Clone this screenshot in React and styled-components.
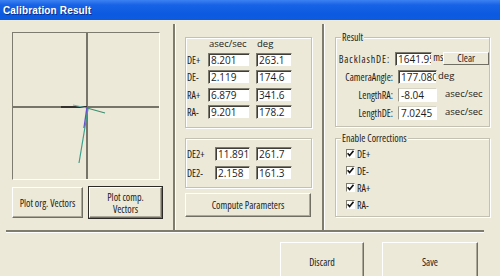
import styled, { createGlobalStyle } from "styled-components";

const GlobalStyle = createGlobalStyle`
  html, body {
    margin: 0;
    padding: 0;
    background: #ece9d8;
  }
`;

const uiFont = `"Open Sans", "Liberation Sans", Arial, sans-serif`;

export default function App() {
  return (
    <>
      <GlobalStyle />
      <Window>
        <TitleBar>Calibration Result</TitleBar>

        <Body>
          <LeftPane>
            <Plot>
              <svg width="146" height="146" viewBox="0 0 146 146">
                <line x1="74" y1="0" x2="74" y2="146" stroke="#77746a" strokeWidth="2" />
                <line x1="0" y1="74" x2="146" y2="74" stroke="#77746a" strokeWidth="2" />
                <line x1="48" y1="74" x2="74" y2="74" stroke="#1c1c1c" strokeWidth="1.5" />
                <line x1="60" y1="72" x2="74" y2="75" stroke="#6fb7b0" strokeWidth="1.2" />
                <line x1="74" y1="75" x2="92" y2="80" stroke="#3b8f70" strokeWidth="1.2" />
                <line x1="74" y1="74" x2="71" y2="95" stroke="#6a4fd0" strokeWidth="1.4" />
                <line x1="75" y1="76" x2="66" y2="130" stroke="#3aa08c" strokeWidth="1.2" />
              </svg>
            </Plot>

            <ButtonRow>
              <Btn $w={71} $h={31}>Plot org. Vectors</Btn>
              <Btn $w={73} $h={31} $default>
                Plot comp.
                <br />
                Vectors
              </Btn>
            </ButtonRow>
          </LeftPane>

          <VSep />

          <MidPane>
            <Group $h={91}>
              <VectorGrid>
                <span />
                <Head>asec/sec</Head>
                <Head>deg</Head>

                <Label>DE+</Label>
                <Field>8.201</Field>
                <Field>263.1</Field>

                <Label>DE-</Label>
                <Field>2.119</Field>
                <Field>174.6</Field>

                <Label>RA+</Label>
                <Field>6.879</Field>
                <Field>341.6</Field>

                <Label>RA-</Label>
                <Field>9.201</Field>
                <Field>178.2</Field>
              </VectorGrid>
            </Group>

            <Group $h={50} $mt={10}>
              <BacklashGrid>
                <Label>DE2+</Label>
                <Field>11.891</Field>
                <Field>261.7</Field>

                <Label>DE2-</Label>
                <Field>2.158</Field>
                <Field>161.3</Field>
              </BacklashGrid>
            </Group>

            <Btn $w={126} $h={24} $mt={5}>
              Compute Parameters
            </Btn>
          </MidPane>

          <VSep />

          <RightPane>
            <Group $h={90} $w={155}>
              <Legend>Result</Legend>
              <ResultList>
                <ResultRow>
                  <RowLabel $ls={0.9}>BacklashDE:</RowLabel>
                  <Field $w={39}>1641.955</Field>
                  <Unit $w={10} $cond>ms</Unit>
                  <SmallBtn>Clear</SmallBtn>
                </ResultRow>
                <ResultRow>
                  <RowLabel>CameraAngle:</RowLabel>
                  <Field $w={39}>177.0804</Field>
                  <Unit>deg</Unit>
                </ResultRow>
                <ResultRow>
                  <RowLabel>LengthRA:</RowLabel>
                  <Field $w={39} $flat>-8.04</Field>
                  <Unit $ml={8}>asec/sec</Unit>
                </ResultRow>
                <ResultRow>
                  <RowLabel>LengthDE:</RowLabel>
                  <Field $w={39} $flat>7.0245</Field>
                  <Unit $ml={8}>asec/sec</Unit>
                </ResultRow>
              </ResultList>
            </Group>

            <Group $h={79} $w={155} $mt={11}>
              <Legend>Enable Corrections</Legend>
              <CheckList>
                {["DE+", "DE-", "RA+", "RA-"].map((name) => (
                  <CheckRow key={name}>
                    <CheckBox>
                      <svg width="7" height="7" viewBox="0 0 7 7">
                        <path d="M0.6 3.3 L2.6 5.6 L6.5 0.8" fill="none" stroke="#111" strokeWidth="1.6" />
                      </svg>
                    </CheckBox>
                    {name}
                  </CheckRow>
                ))}
              </CheckList>
            </Group>
          </RightPane>
        </Body>

        <HSep />

        <Footer>
          <Btn $w={84} $h={40}>Discard</Btn>
          <Btn $w={96} $h={40}>Save</Btn>
        </Footer>
      </Window>
    </>
  );
}

const Window = styled.div`
  width: 500px;
  height: 276px;
  overflow: hidden;
  background: #ece9d8;
  font-family: ${uiFont};
  font-stretch: 75%;
  font-size: 10px;
  color: #1b1b1b;
`;

const TitleBar = styled.div`
  height: 20px;
  padding-left: 3px;
  background: linear-gradient(#3c82f2 0%, #1763e6 25%, #0c5ae0 70%, #0d5bdf 100%);
  color: #fff;
  font-family: "Liberation Sans", Arial, sans-serif;
  font-stretch: 100%;
  font-weight: bold;
  font-size: 10px;
  letter-spacing: 0.15px;
  line-height: 21px;
  text-shadow: 1px 1px 0 #0a2f8a;
`;

const Body = styled.div`
  display: flex;
  height: 210px;
`;

const LeftPane = styled.div`
  width: 173px;
  padding: 12px 0 0 12px;
  box-sizing: border-box;
`;

const Plot = styled.div`
  width: 148px;
  height: 148px;
  box-sizing: border-box;
  background: #ece9d8;
  border: 1px solid;
  border-color: #7d7a6e #fff #fff #7d7a6e;

  svg {
    display: block;
  }
`;

const ButtonRow = styled.div`
  display: flex;
  gap: 6px;
  margin-top: 7px;
`;

const Btn = styled.button`
  width: ${(p) => p.$w}px;
  height: ${(p) => p.$h}px;
  margin-top: ${(p) => p.$mt || 0}px;
  padding: 0;
  box-sizing: border-box;
  background: #ece9d8;
  font-family: ${uiFont};
  font-stretch: 75%;
  font-size: 10px;
  line-height: 12px;
  color: #1b1b1b;
  border: 1px solid;
  border-color: #fff #716f64 #716f64 #fff;
  box-shadow: ${(p) =>
    p.$default
      ? "0 0 0 1px #2b2a24, inset -1px -1px 0 #aca899"
      : "inset -1px -1px 0 #aca899"};
`;

const VSep = styled.div`
  width: 0;
  margin-top: 4px;
  border-left: 2px solid #7f7c6d;
  border-right: 1px solid #fff;
`;

const MidPane = styled.div`
  width: 146px;
  padding: 17px 0 0 9px;
  box-sizing: border-box;
`;

const RightPane = styled.div`
  flex: 1;
  padding: 17px 0 0 10px;
  box-sizing: border-box;
`;

const Group = styled.div`
  position: relative;
  width: ${(p) => p.$w || 127}px;
  height: ${(p) => p.$h}px;
  margin-top: ${(p) => p.$mt || 0}px;
  box-sizing: border-box;
  border: 1px solid #c4c1b2;
  box-shadow: inset 1px 1px 0 #fff, 1px 1px 0 #fff;
`;

const Legend = styled.span`
  position: absolute;
  top: -7px;
  left: 5px;
  padding: 0 1px;
  background: #ece9d8;
  line-height: 12px;
`;

const VectorGrid = styled.div`
  display: grid;
  grid-template-columns: 15px 42px 36px;
  grid-template-rows: 10px repeat(4, 14px);
  column-gap: 6px;
  row-gap: 3.5px;
  padding: 1px 0 0 1px;
  align-items: center;
`;

const BacklashGrid = styled.div`
  display: grid;
  grid-template-columns: 22px 35px 36px;
  grid-template-rows: repeat(2, 14px);
  column-gap: 6px;
  row-gap: 5px;
  padding: 8px 0 0 1px;
  align-items: center;
`;

const Head = styled.span`
  padding-left: 1px;
  line-height: 10px;
  font-stretch: 100%;
  font-size: 9.5px;
`;

const Label = styled.span`
  white-space: nowrap;
  line-height: 14px;
`;

const Field = styled.div`
  width: ${(p) => (p.$w ? `${p.$w}px` : "auto")};
  height: 14px;
  box-sizing: border-box;
  padding-left: 2px;
  background: #fff;
  border: 1px solid;
  border-color: ${(p) =>
    p.$flat ? "#d6d3c4 #fff #fff #a09d90" : "#7d7a6e #ece9d8 #ece9d8 #7d7a6e"};
  box-shadow: ${(p) => (p.$flat ? "none" : "inset 1px 1px 0 #3f3e38")};
  font-stretch: 100%;
  line-height: 13px;
  white-space: nowrap;
  overflow: hidden;
`;

const ResultList = styled.div`
  display: flex;
  flex-direction: column;
  gap: 4px;
  padding-top: 14px;
`;

const ResultRow = styled.div`
  display: flex;
  align-items: center;
  height: 14px;
`;

const RowLabel = styled.span`
  width: 57px;
  margin-right: 5px;
  text-align: right;
  white-space: nowrap;
  letter-spacing: ${(p) => p.$ls || 0}px;
`;

const Unit = styled.span`
  width: ${(p) => (p.$w ? `${p.$w}px` : "auto")};
  margin-left: ${(p) => p.$ml || 1}px;
  font-stretch: ${(p) => (p.$cond ? "75%" : "100%")};
  font-size: ${(p) => (p.$cond ? 10 : 9.5)}px;
  white-space: nowrap;
  align-self: flex-start;
  line-height: 11px;
`;

const SmallBtn = styled.button`
  width: 48px;
  height: 13px;
  margin-top: -1px;
  padding: 0;
  box-sizing: border-box;
  background: #ece9d8;
  font-family: ${uiFont};
  font-stretch: 75%;
  font-size: 10px;
  line-height: 11px;
  color: #1b1b1b;
  border: 1px solid;
  border-color: #fff #716f64 #716f64 #fff;
`;

const CheckList = styled.div`
  display: flex;
  flex-direction: column;
  gap: 4px;
  padding: 8px 0 0 10px;
`;

const CheckRow = styled.label`
  display: flex;
  align-items: center;
  gap: 2px;
  height: 13px;
`;

const CheckBox = styled.span`
  display: flex;
  align-items: center;
  justify-content: center;
  width: 9px;
  height: 9px;
  box-sizing: border-box;
  background: #fff;
  border: 1px solid;
  border-color: #7d7a6e #fff #fff #7d7a6e;
`;

const HSep = styled.div`
  width: 478px;
  margin-left: 6px;
  border-top: 2px solid #7f7c6d;
  border-bottom: 1px solid #fff;
`;

const Footer = styled.div`
  display: flex;
  gap: 18px;
  padding: 9px 0 0 280px;
`;
